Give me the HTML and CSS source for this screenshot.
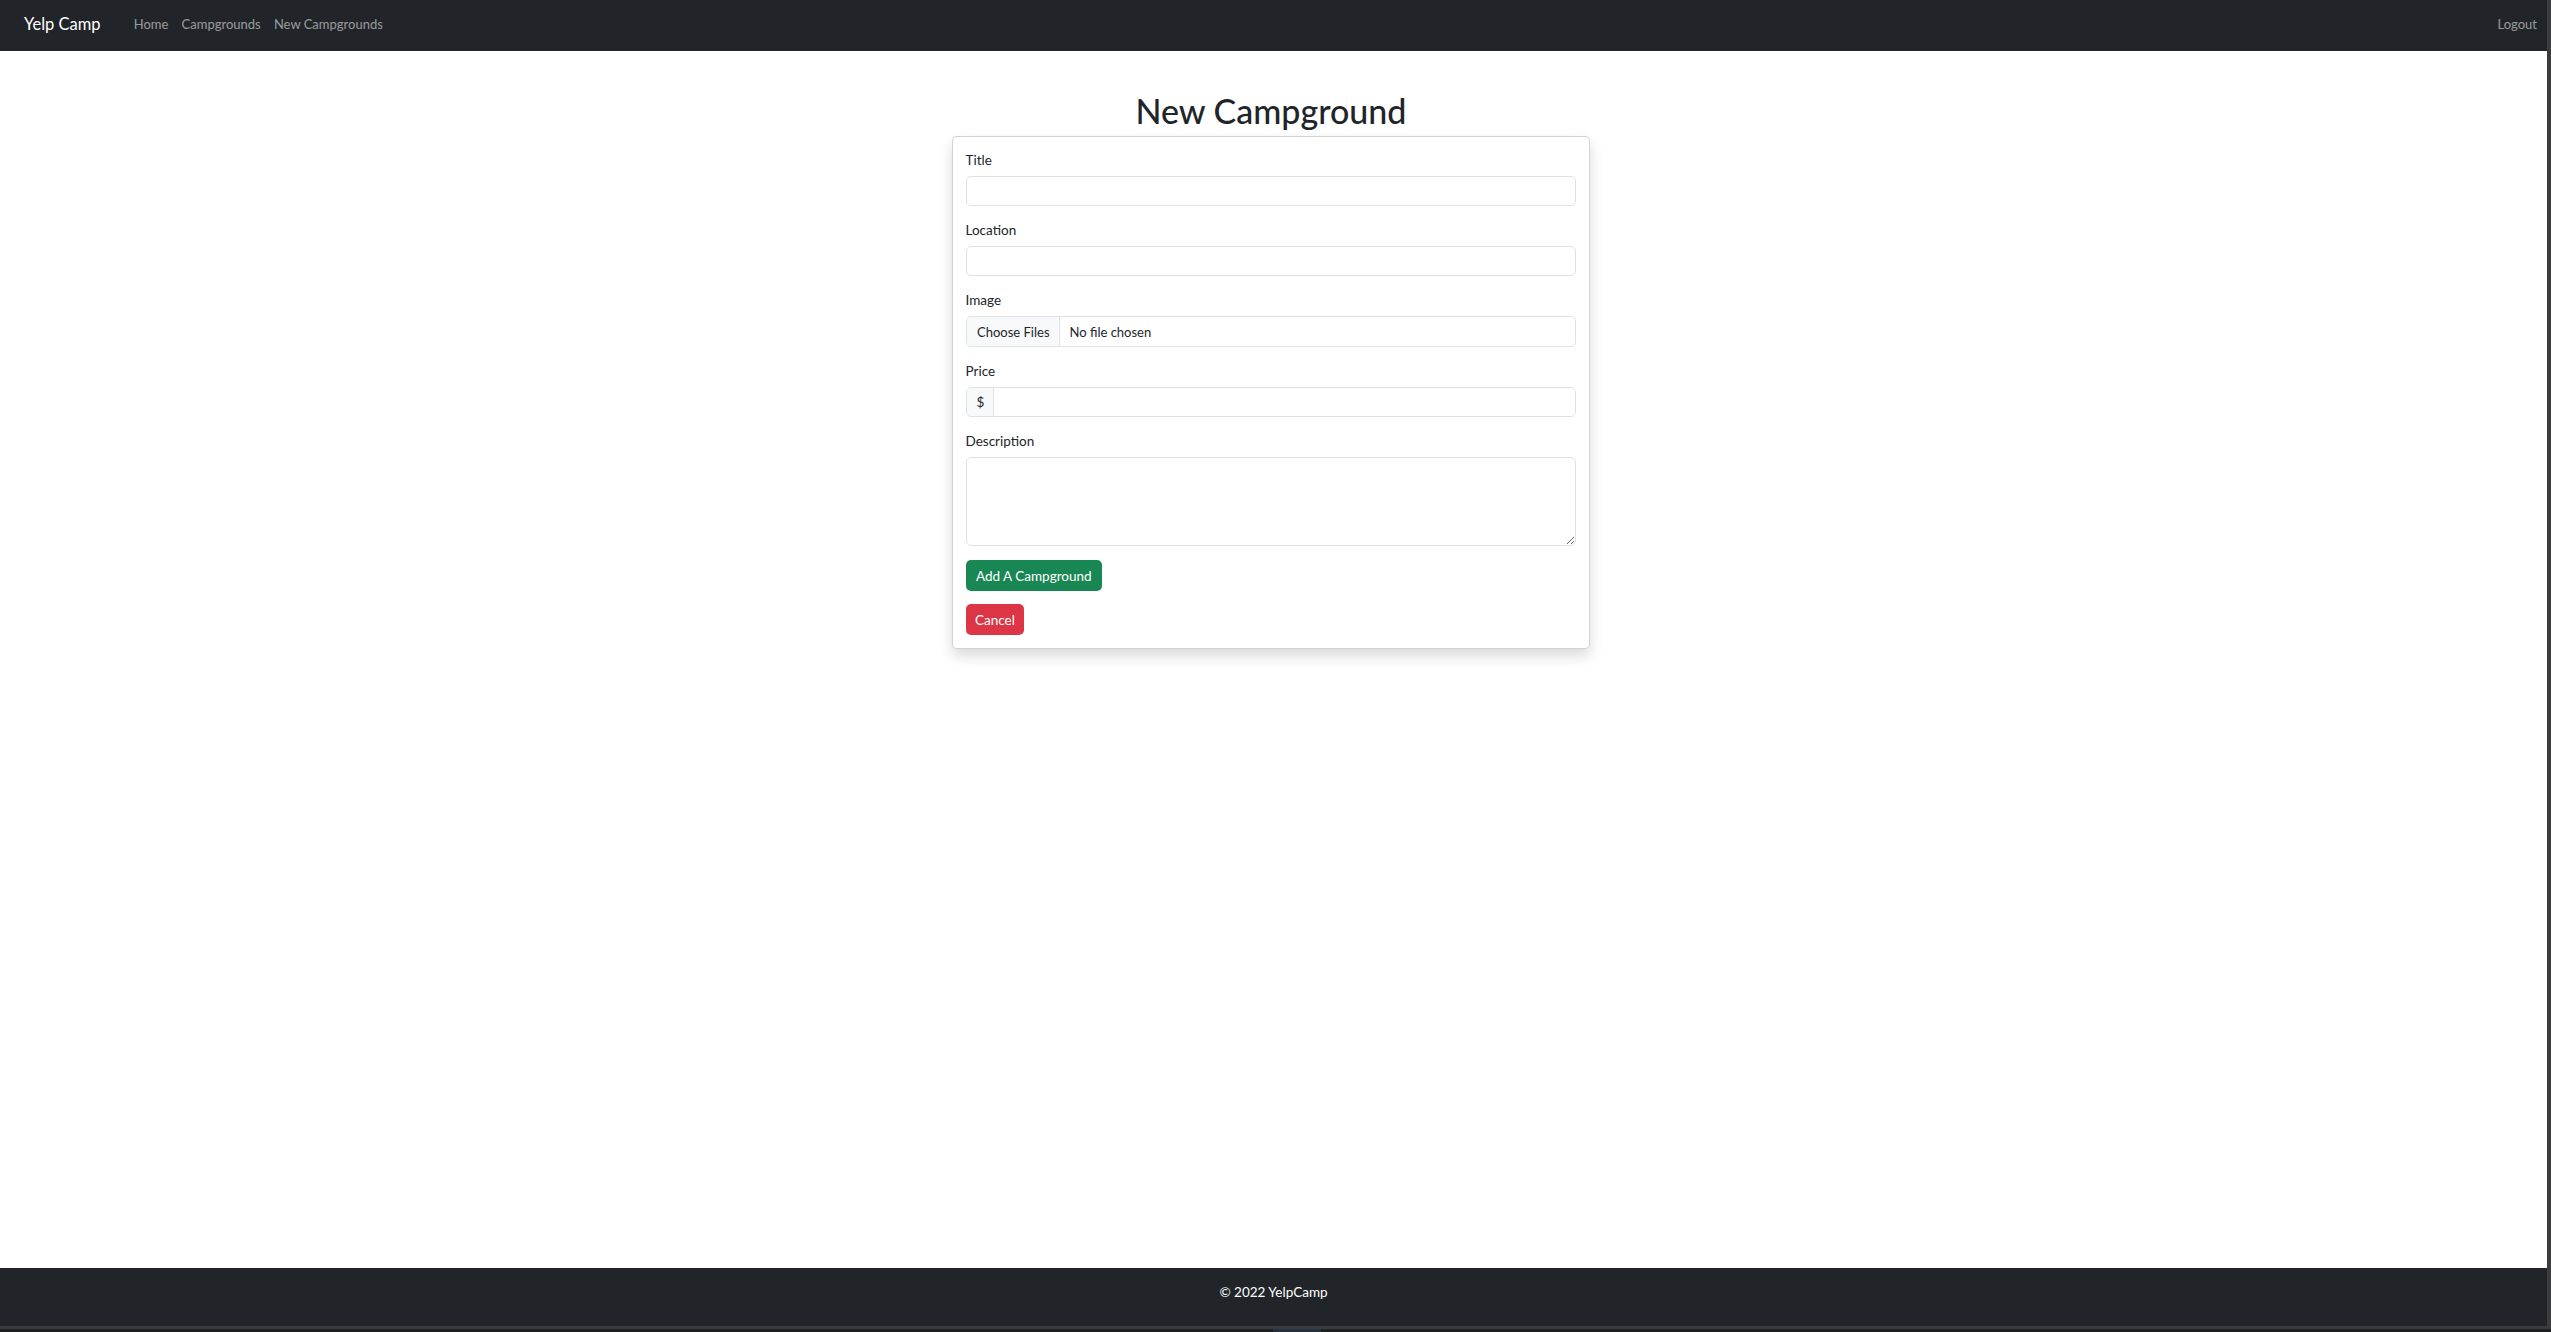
FILE: index.html
```html
<!DOCTYPE html>
<html lang="en">
<head>
<meta charset="utf-8">
<title>New Campground</title>
<link rel="stylesheet" href="styles.css">
</head>
<body>
<div class="screen">
  <div class="page">
    <nav class="navbar">
      <a class="brand" href="#">Yelp Camp</a>
      <div class="nav-links">
        <a class="nav-link" href="#">Home</a>
        <a class="nav-link" href="#">Campgrounds</a>
        <a class="nav-link" href="#">New Campgrounds</a>
      </div>
      <div class="nav-right">
        <a class="nav-link" href="#">Logout</a>
      </div>
    </nav>

    <main class="main">
      <div class="column">
        <h1 class="title">New Campground</h1>
        <div class="card">
          <form class="form">
            <div class="field">
              <label class="label" for="title">Title</label>
              <input class="control" type="text" id="title">
            </div>
            <div class="field">
              <label class="label" for="location">Location</label>
              <input class="control" type="text" id="location">
            </div>
            <div class="field">
              <label class="label" for="image">Image</label>
              <input class="control file-control" type="file" id="image" multiple>
            </div>
            <div class="field">
              <label class="label" for="price">Price</label>
              <div class="input-group">
                <span class="addon">$</span>
                <input class="group-control" type="text" id="price">
              </div>
            </div>
            <div class="field field-wide">
              <label class="label" for="description">Description</label>
              <textarea class="control textarea" id="description"></textarea>
            </div>
            <div class="actions">
              <button class="btn btn-success" type="button">Add A Campground</button>
            </div>
            <div>
              <a class="btn btn-danger" href="#">Cancel</a>
            </div>
          </form>
        </div>
      </div>
    </main>

    <footer class="footer">
      <span>© 2022 YelpCamp</span>
    </footer>
  </div>
  <div class="scroll-strip"></div>
</div>
<div class="bottom-edge"><span class="edge-tab"></span></div>
</body>
</html>
```

FILE: styles.css
```css
* {
  box-sizing: border-box;
}

html, body {
  margin: 0;
  padding: 0;
}

body {
  background: #202124;
  font-family: Lato, "Liberation Sans", sans-serif;
  font-size: 13.5px;
  color: #212529;
  overflow: hidden;
}

.screen {
  display: flex;
  height: 1326px;
}

.page {
  flex: 1;
  display: flex;
  flex-direction: column;
  background: #ffffff;
}

.scroll-strip {
  width: 4px;
  background: #3c3c3c;
}

.bottom-edge {
  height: 6px;
  display: flex;
  align-items: flex-end;
  background: linear-gradient(#3b3b3b 0 3px, #1f2023 3px 6px);
}

.edge-tab {
  display: block;
  margin-left: 1273px;
  width: 48px;
  height: 3px;
  background: #26303f;
}

/* Navbar */
.navbar {
  height: 51px;
  display: flex;
  align-items: center;
  padding: 0 10px 3.5px 24px;
  background: #212529;
}

.brand {
  font-size: 16.5px;
  line-height: 24px;
  color: #ffffff;
  text-decoration: none;
  margin-right: 26.5px;
}

.nav-links {
  display: flex;
}

.nav-right {
  margin-left: auto;
  display: flex;
}

.nav-link {
  font-size: 13px;
  line-height: 20px;
  padding: 0 6.6px;
  color: rgba(255, 255, 255, 0.55);
  text-decoration: none;
}

.nav-right .nav-link {
  padding-right: 0;
}

/* Main */
.main {
  flex: 1;
  display: flex;
  justify-content: center;
  padding-right: 5px;
}

.column {
  width: 638px;
}

.title {
  margin: 39px 0 5px;
  font-size: 34px;
  line-height: 41px;
  font-weight: 500;
  text-align: center;
  color: #212529;
}

.card {
  border: 1px solid rgba(0, 0, 0, 0.175);
  border-radius: 5px;
  background: #ffffff;
  box-shadow: 0 7px 14px rgba(0, 0, 0, 0.15);
  padding: 13px 13px 13px 12.5px;
}

.field {
  margin-bottom: 14px;
}

.label {
  display: block;
  line-height: 21px;
  margin-bottom: 5px;
}

.control {
  display: block;
  width: 100%;
  height: 30px;
  padding: 0 10.5px;
  font-family: inherit;
  font-size: 13.5px;
  color: #212529;
  background: #ffffff;
  border: 1px solid #dee2e6;
  border-radius: 5px;
  outline: none;
}

.file-control {
  height: 31px;
  padding: 0;
  overflow: hidden;
  font-size: 13px;
}

.file-control::file-selector-button {
  height: 100%;
  margin: 0 9.5px 0 0;
  padding: 0 9.5px 0 10.5px;
  font-family: inherit;
  font-size: 13px;
  color: #212529;
  background: #f8f9fa;
  border: 0;
  border-right: 1px solid #dee2e6;
  border-radius: 0;
}

.input-group {
  display: flex;
  height: 30px;
  border: 1px solid #dee2e6;
  border-radius: 5px;
  overflow: hidden;
}

.addon {
  display: flex;
  align-items: center;
  padding: 0 9px 0 10px;
  background: #f8f9fa;
  border-right: 1px solid #dee2e6;
}

.group-control {
  flex: 1;
  border: 0;
  outline: none;
  padding: 0 10.5px;
  font-family: inherit;
  font-size: 13.5px;
}

.textarea {
  height: 89px;
  padding: 5px 10.5px;
  resize: vertical;
}

.actions {
  margin-bottom: 13px;
}

.btn {
  display: inline-flex;
  align-items: center;
  height: 31px;
  padding: 0 10.5px;
  font-family: inherit;
  font-size: 13.5px;
  color: #ffffff;
  border: 0;
  border-radius: 5px;
  text-decoration: none;
  cursor: pointer;
}

.btn-danger {
  padding: 0 9.5px;
}

.btn-success {
  background: #198754;
}

.btn-danger {
  background: #dc3545;
}

/* Footer */
.footer {
  height: 58px;
  padding-top: 14px;
  text-align: center;
  line-height: 20px;
  color: #ffffff;
  background: #212529;
}
```
